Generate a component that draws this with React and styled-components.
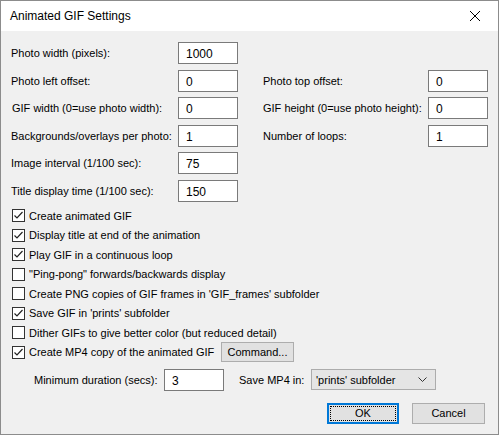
import styled, { createGlobalStyle } from 'styled-components'

const Global = createGlobalStyle`
  body { margin: 0; background: #fff; font-family: "Liberation Sans", Arial, sans-serif; font-size: 11px; color: #000; }
  * { white-space: nowrap; }
`

const Window = styled.div`
  width: 499px; height: 435px; box-sizing: border-box; overflow: hidden;
  border: 1px solid #8c8c8c; background: #f0f0f0;
  display: flex; flex-direction: column;
`
const TitleBar = styled.div`
  height: 30px; flex-shrink: 0; background: #fff; display: flex; align-items: center;
  justify-content: space-between; padding: 0 0 0 9px; font-size: 12px;
`
const Close = styled.div`
  width: 46px; height: 30px; display: flex; align-items: center; justify-content: center;
`
const Body = styled.div`
  padding: 11px 12px 0 10px; display: flex; flex-direction: column;
`
const Grid = styled.div`
  display: grid; grid-template-columns: 167px 60px 25px 165px 60px;
  grid-auto-rows: 22px; row-gap: 5.6px; align-items: center;
`
const Label = styled.span`
  padding-left: ${p => p.indent || 0}px;
`
const Input = styled.div`
  height: 22px; box-sizing: border-box; border: 1px solid #7a7a7a; background: #fff;
  padding: 4px 0 0 7px; width: ${p => p.w || 60}px; font-size: 12px;
`
const Checks = styled.div`
  display: flex; flex-direction: column; margin-top: 4px;
`
const CheckRow = styled.label`
  height: 19.5px; display: flex; align-items: center; gap: 4px; padding-left: 1px;
`
const Box = styled.span`
  width: 13px; height: 13px; flex-shrink: 0; box-sizing: border-box; border: 1px solid #333; background: #fff;
  display: flex; align-items: center; justify-content: center;
`
const Button = styled.div`
  height: ${p => p.h || 20}px; box-sizing: border-box; border: 1px solid ${p => p.def ? '#0078d7' : '#adadad'};
  background: #e1e1e1; display: flex; align-items: center; justify-content: center;
  width: ${p => p.w}px; flex-shrink: 0;
  box-shadow: ${p => p.def ? 'inset 0 0 0 1px #0078d7' : 'none'};
  outline: ${p => p.def ? '1px dotted #000' : 'none'}; outline-offset: -4px;
`
const Fixed = styled.span`
  width: ${p => p.w}px; margin-left: ${p => p.ml || 0}px; flex-shrink: 0;
`
const MinRow = styled.div`
  display: flex; align-items: center; margin-top: 7px; padding-left: 23px;
`
const Select = styled.div`
  width: 125px; height: 21px; box-sizing: border-box; border: 1px solid #acacac; background: #e5e5e5;
  display: flex; align-items: center; justify-content: space-between; padding: 0 8px 0 4px;
`
const Footer = styled.div`
  display: flex; justify-content: flex-end; gap: 13px; margin-top: 12px; padding-right: 1px;
`

const Tick = () => (
  <svg width="11" height="11" viewBox="0 0 11 11"><path d="M1.5 5.5 L4 8 L9.5 2" fill="none" stroke="#222" strokeWidth="1.2" /></svg>
)

const checks = [
  [true, 'Create animated GIF'],
  [true, 'Display title at end of the animation'],
  [true, 'Play GIF in a continuous loop'],
  [false, '"Ping-pong" forwards/backwards display'],
  [false, "Create PNG copies of GIF frames in 'GIF_frames' subfolder"],
  [true, "Save GIF in 'prints' subfolder"],
  [false, 'Dither GIFs to give better color (but reduced detail)'],
]

export default function App() {
  return (
    <Window>
      <Global />
      <TitleBar>
        <span>Animated GIF Settings</span>
        <Close>
          <svg width="10" height="10" viewBox="0 0 10 10"><path d="M0 0L10 10M10 0L0 10" stroke="#000" strokeWidth="1" /></svg>
        </Close>
      </TitleBar>
      <Body>
        <Grid>
          <Label>Photo width (pixels):</Label><Input>1000</Input><span /><span /><span />
          <Label>Photo left offset:</Label><Input>0</Input><span /><Label>Photo top offset:</Label><Input>0</Input>
          <Label indent={1}>GIF width (0=use photo width):</Label><Input>0</Input><span /><Label>GIF height (0=use photo height):</Label><Input>0</Input>
          <Label>Backgrounds/overlays per photo:</Label><Input>1</Input><span /><Label>Number of loops:</Label><Input>1</Input>
          <Label>Image interval (1/100 sec):</Label><Input>75</Input><span /><span /><span />
          <Label>Title display time (1/100 sec):</Label><Input>150</Input><span /><span /><span />
        </Grid>
        <Checks>
          {checks.map(([on, t]) => (
            <CheckRow key={t}><Box>{on && <Tick />}</Box>{t}</CheckRow>
          ))}
          <CheckRow as="div">
            <Box><Tick /></Box>
            <Fixed w={188}>Create MP4 copy of the animated GIF</Fixed>
            <Button w={73}>Command...</Button>
          </CheckRow>
        </Checks>
        <MinRow>
          <Fixed w={130}>Minimum duration (secs):</Fixed>
          <Input>3</Input>
          <Fixed w={72} ml={15}>Save MP4 in:</Fixed>
          <Select>
            <span>'prints' subfolder</span>
            <svg width="9" height="5" viewBox="0 0 9 5"><path d="M0.5 0.5L4.5 4.5L8.5 0.5" fill="none" stroke="#333" /></svg>
          </Select>
        </MinRow>
        <Footer>
          <Button w={72} h={21} def>OK</Button>
          <Button w={73} h={21}>Cancel</Button>
        </Footer>
      </Body>
    </Window>
  )
}
